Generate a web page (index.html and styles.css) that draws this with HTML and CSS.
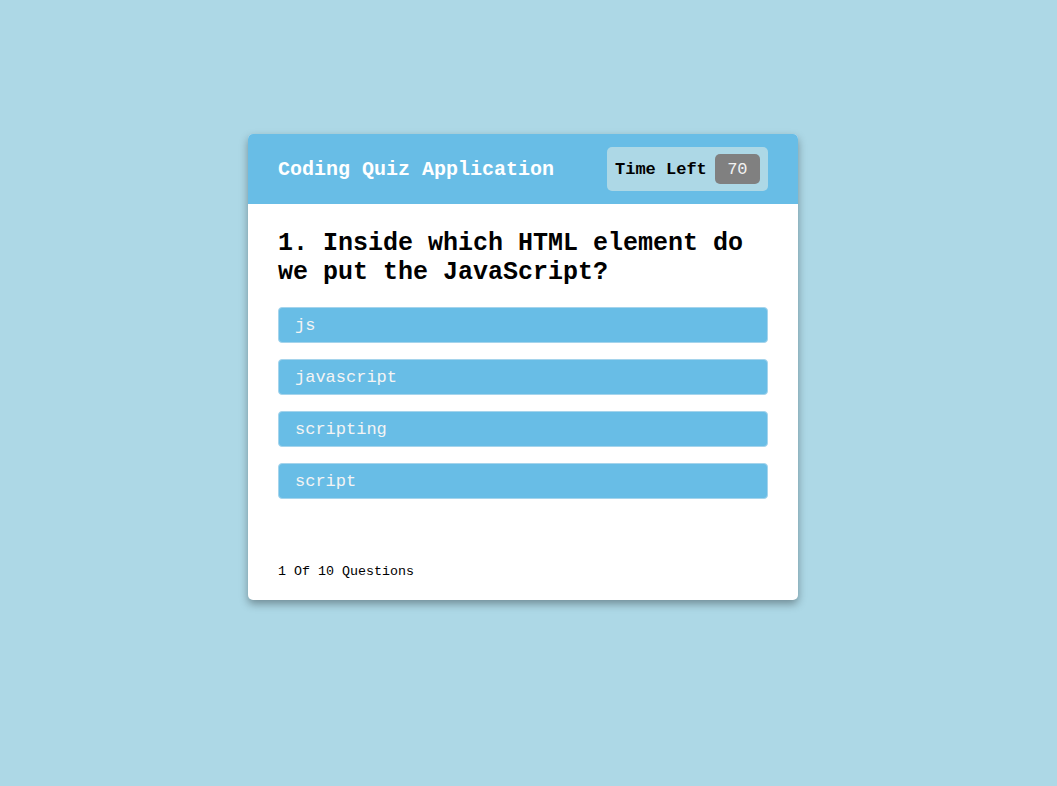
FILE: index.html
```html
<!DOCTYPE html>
<html>
<head>
<meta charset="utf-8">
<link rel="stylesheet" href="styles.css">
</head>
<body>
<div class="quiz">
  <div class="quiz-header">
    <div class="title">Coding Quiz Application</div>
    <div class="timer">
      <span class="timer-label">Time Left</span>
      <span class="timer-sec">70</span>
    </div>
  </div>
  <div class="quiz-body">
    <h2 class="question">1. Inside which HTML element do we put the JavaScript?</h2>
    <ul class="options">
      <li class="option">js</li>
      <li class="option">javascript</li>
      <li class="option">scripting</li>
      <li class="option">script</li>
    </ul>
  </div>
  <div class="quiz-footer">1 Of 10 Questions</div>
</div>
</body>
</html>
```
FILE: styles.css
```css
html, body {
  margin: 0;
  padding: 0;
}
body {
  background: #add8e6;
  font-family: "Liberation Mono", "Courier New", monospace;
  min-height: 786px;
  padding-top: 134px;
  box-sizing: border-box;
}
.quiz {
  width: 550px;
  margin-left: 248px;
  background: #fff;
  border-radius: 5px;
  box-shadow: 0 4px 8px rgba(0, 0, 0, 0.35);
  overflow: hidden;
}
.quiz-header {
  height: 70px;
  background: #68bde6;
  display: flex;
  align-items: center;
  justify-content: space-between;
  padding: 0 30px;
}
.title {
  color: #fff;
  font-weight: bold;
  font-size: 20px;
}
.timer {
  width: 161px;
  height: 44px;
  box-sizing: border-box;
  background: #add8e6;
  border-radius: 5px;
  display: flex;
  align-items: center;
  padding: 0 8px;
  gap: 8px;
}
.timer-label {
  font-weight: bold;
  font-size: 17px;
  color: #000;
}
.timer-sec {
  width: 45px;
  height: 30px;
  background: #808080;
  border-radius: 5px;
  color: #f2f2f2;
  font-size: 17px;
  display: flex;
  align-items: center;
  justify-content: center;
}
.quiz-body {
  padding: 25px 30px 0;
}
.question {
  margin: 0;
  font-size: 25px;
  line-height: 29px;
  font-weight: bold;
  color: #000;
}
.options {
  list-style: none;
  margin: 20px 0 0;
  padding: 0;
  display: flex;
  flex-direction: column;
  gap: 16px;
}
.option {
  height: 36px;
  box-sizing: border-box;
  background: #68bde6;
  border: 1px solid #a5d4ec;
  border-radius: 4px;
  color: #f4f4f4;
  font-size: 17px;
  padding-left: 16px;
  display: flex;
  align-items: center;
}
.quiz-footer {
  padding: 65px 30px 20px;
  font-size: 13.33px;
  line-height: 16px;
  color: #000;
}
```
